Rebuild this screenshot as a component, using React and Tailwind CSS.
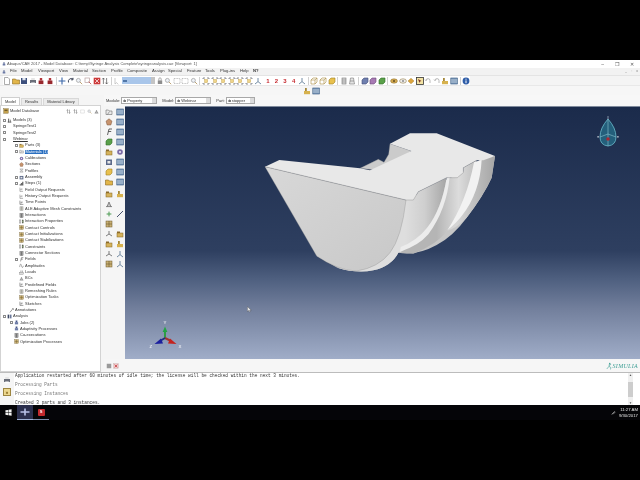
const glyphs = {
  doc: <path d="M1.5.5h3.5l1.5 1.5v5.5h-5z" fill="#fff" stroke="#8a8a8a" strokeWidth=".7" />,
  open: <path d="M.5 2h3l1 1h3v4h-7z" fill="#e2b64a" stroke="#8a6a20" strokeWidth=".6" />,
  disk: <><rect x="1" y="1" width="6" height="6" fill="#3c4f7c" /><rect x="2.4" y="1" width="3.2" height="2.2" fill="#dfe5ef" /></>,
  print: <><rect x="1" y="3" width="6" height="3" fill="#6b6f7a" /><rect x="2.2" y="1" width="3.6" height="2" fill="#e5e5e5" /><rect x="2.2" y="5.5" width="3.6" height="1.8" fill="#fff" /></>,
  redjob: <><rect x="2.8" y="1" width="2.4" height="2.5" fill="#b3363a" /><rect x="1.6" y="3.5" width="4.8" height="3.6" fill="#98282e" /></>,
  move: <path d="M4 .6v6.8M.6 4h6.8" stroke="#3b66a8" strokeWidth="1.1" />,
  rot: <path d="M1.5 5.5A3 3 0 0 1 6 2M6 .8V2.8H4" fill="none" stroke="#30384d" strokeWidth=".9" />,
  mag: <><circle cx="3.4" cy="3.4" r="2" fill="#eef2f7" stroke="#9a9a9a" strokeWidth=".7" /><path d="M5 5l2.2 2.2" stroke="#b59a66" strokeWidth=".9" /></>,
  box: <><rect x="1" y="1" width="4.4" height="4.4" fill="none" stroke="#b8a0a0" strokeWidth=".7" /><path d="M4.6 4.6l2.6 2.6" stroke="#c4605c" strokeWidth=".9" /></>,
  fit: <><rect x=".7" y=".7" width="6.6" height="6.6" fill="#cc3a3a" /><path d="M2 2l4 4M6 2l-4 4" stroke="#fff" strokeWidth=".7" /></>,
  updown: <path d="M2.4 1v6M5.6 1v6M1.2 2.4L2.4 1l1.2 1.4M4.4 5.6L5.6 7l1.2-1.4" fill="none" stroke="#555" strokeWidth=".7" />,
  sel: <path d="M2 1v6l1.6-1.4 1.6 1.8" fill="none" stroke="#b5b5b5" strokeWidth=".7" />,
  lock: <><rect x="1.8" y="3.4" width="4.4" height="3.6" fill="#8d8d8d" /><path d="M2.8 3.4V2a1.2 1.2 0 0 1 2.4 0v1.4" fill="none" stroke="#8d8d8d" strokeWidth=".7" /></>,
  dashed: <rect x="1" y="1.5" width="6" height="5" fill="none" stroke="#a9a9a9" strokeWidth=".7" strokeDasharray="1 .6" />,
  view: <><path d="M1 2V1h2M5 1h2v1M7 6v1H5M3 7H1V6" fill="none" stroke="#5b6068" strokeWidth=".7" /><rect x="2.6" y="2.6" width="3" height="3" fill="#eed48a" stroke="#bd9a3a" strokeWidth=".4" /></>,
  axis: <path d="M4 1v3.6M4 4.6L1 7M4 4.6L7 7" fill="none" stroke="#52708e" strokeWidth=".8" />,
  cubeL: <path d="M1 3l2-2h4v4l-2 2H1zM1 3h4v4M5 3l2-2" fill="#fff" stroke="#a88a3c" strokeWidth=".6" />,
  cubeY: <path d="M1 3l2-2h4v4l-2 2H1z" fill="#e8c04e" stroke="#a07f22" strokeWidth=".6" />,
  grid: <><rect x="2" y="1" width="4" height="6" fill="#d9d9d9" stroke="#777" strokeWidth=".6" /><path d="M2 3h4M2 5h4" stroke="#777" strokeWidth=".5" /></>,
  grid2: <path d="M2.5 1h3l1 6h-5zM2 4h4" fill="#e4e4e4" stroke="#777" strokeWidth=".6" />,
  cubeB: <path d="M1 3l2-2h4v4l-2 2H1z" fill="#6f7fae" stroke="#444d78" strokeWidth=".6" />,
  cubeP: <path d="M1 3l2-2h4v4l-2 2H1z" fill="#a77ab3" stroke="#6d4a7a" strokeWidth=".6" />,
  cubeG: <path d="M1 3l2-2h4v4l-2 2H1z" fill="#5aa04a" stroke="#32702a" strokeWidth=".6" />,
  lens: <><ellipse cx="4" cy="4" rx="3.4" ry="2.2" fill="#d4aa50" stroke="#84682a" strokeWidth=".5" /><circle cx="4" cy="4" r="1" fill="#5f4b20" /></>,
  lensW: <><ellipse cx="4" cy="4" rx="3.4" ry="2.2" fill="#eee" stroke="#84682a" strokeWidth=".5" /><circle cx="4" cy="4" r="1" fill="#8b8b8b" /></>,
  dia: <path d="M4 1.2L7 4 4 6.8 1 4z" fill="#dca53e" stroke="#99711f" strokeWidth=".4" />,
  hl: <><rect x=".5" y=".5" width="7" height="7" fill="#f3e3a4" stroke="#333" strokeWidth=".8" /><path d="M2 2l3.5 2-1.5.5-.5 1.5z" fill="#7a2f20" /></>,
  undo: <path d="M6 6V3.6A2 2 0 0 0 2 3.6L1 2.6M2 3.6l1-1" fill="none" stroke="#9c9c9c" strokeWidth=".7" />,
  gold: <><rect x="1" y="4" width="6" height="3.2" fill="#d7b24e" /><rect x="2" y="1" width="1.8" height="3" fill="#a4873a" /></>,
  table: <><rect x=".8" y="1" width="6.6" height="6" fill="#7e9ab9" stroke="#33567f" strokeWidth=".6" /><path d="M.8 3h6.6M.8 5h6.6" stroke="#e8eef5" strokeWidth=".5" /></>,
  info: <><circle cx="4" cy="4" r="3.4" fill="#2f5da8" /><rect x="3.5" y="3.4" width="1" height="2.8" fill="#fff" /><rect x="3.5" y="1.7" width="1" height="1" fill="#fff" /></>,
  part: <><rect x="1" y="3" width="6" height="4" fill="#d5b25c" stroke="#83651f" strokeWidth=".5" /><rect x="1" y="1.5" width="3" height="1.5" fill="#8b6a2a" /></>,
  db: <><rect x="1" y="1" width="6" height="6" fill="#c2a04c" stroke="#6f5a20" strokeWidth=".5" /><rect x="2" y="2.4" width="4" height="1.2" fill="#4e3f1a" /></>,
  mat: <path d="M1 6.5V2h2.4l1 1H7v3.5zM2.5 6.5l2-3" fill="#e9e9e9" stroke="#6e6e6e" strokeWidth=".6" />,
  model: <><rect x="2" y="1" width="1.4" height="6" fill="#474747" /><rect x="4.6" y="2.6" width="1.4" height="4.4" fill="#7f7f7f" /><rect x="1" y="6" width="6" height="1" fill="#333" /></>,
  cal: <><circle cx="4" cy="4" r="2.8" fill="#7b6ba7" /><circle cx="4" cy="4" r="1.1" fill="#e9e6f2" /></>,
  sec: <path d="M4 .8L7 3.2 5.8 7H2.2L1 3.2z" fill="#c7936d" stroke="#7a553a" strokeWidth=".5" />,
  prof: <path d="M1.4 1.4h5.2L4.8 4l1.8 2.6H1.4L3.2 4z" fill="#ddd" stroke="#7a7a7a" strokeWidth=".6" />,
  asm: <><rect x="1" y="1.5" width="6" height="5.5" fill="#5c6a8a" /><rect x="2.4" y="3" width="3" height="2.5" fill="#e7e7e7" /></>,
  step: <path d="M1 7V5h2V3h2V1h2v6z" fill="#686868" />,
  req: <path d="M1.5 1v6h5M3 5V3M4.6 5V2" fill="none" stroke="#5a5a5a" strokeWidth=".7" />,
  tp: <path d="M1.5 1v6h5.5M3.4 5.5V3.4H6" fill="none" stroke="#3c3c3c" strokeWidth=".8" />,
  mesh: <path d="M1.5 1h5v6h-5zM1.5 3h5M1.5 5h5M4 1v6" fill="#f0f0e4" stroke="#5a5a5a" strokeWidth=".5" />,
  ctl: <><rect x="1" y="1" width="6" height="6" fill="#c9b074" stroke="#6c5a2c" strokeWidth=".5" /><path d="M1 4h6M4 1v6" stroke="#5b4a20" strokeWidth=".5" /></>,
  con: <><rect x="1" y="1.5" width="2" height="5" fill="#eee" stroke="#4f4f4f" strokeWidth=".5" /><rect x="5" y="1.5" width="2" height="5" fill="#87a86a" stroke="#4f4f4f" strokeWidth=".5" /></>,
  conn: <><rect x="1.5" y="1" width="5" height="6" fill="#aaa" stroke="#444" strokeWidth=".6" /><path d="M4 1v6" stroke="#333" strokeWidth=".7" /></>,
  field: <path d="M2.5 7L4 1h3M3.4 3.5h2.8" fill="none" stroke="#3f3f3f" strokeWidth=".8" />,
  amp: <path d="M1 6.5c1-6 2-6 3-2s2 3 3 0" fill="none" stroke="#5a5a5a" strokeWidth=".8" />,
  load: <><rect x="1" y="4" width="6" height="3" fill="#ddd" stroke="#666" strokeWidth=".5" /><path d="M3 .8v3M5.4.8v3" stroke="#444" strokeWidth=".7" /></>,
  bc: <path d="M1 6.6h6M2 6.6L4 2l2 4.6" fill="#c5c5c5" stroke="#4b4b4b" strokeWidth=".6" />,
  ann: <path d="M1.5 7L5.4 2M5 1h2v2" fill="none" stroke="#333" strokeWidth=".8" />,
  ana: <><rect x="1" y="1" width="2.6" height="6" fill="#3f4a66" /><rect x="4.6" y="1" width="2.6" height="6" fill="#6b7899" /></>,
  job: <><rect x="2.6" y=".8" width="2.8" height="2.6" fill="#45568a" /><rect x="1.4" y="3.4" width="5.2" height="3.6" fill="#6c7aa6" /></>,
  greenp: <path d="M4 1.6v4.8M1.6 4h4.8" stroke="#4d9a52" strokeWidth="1" />,
  line: <path d="M1 7l6-6" stroke="#33415f" strokeWidth=".9" />,
  csys: <path d="M4 4V1M4 4L1 6M4 4l3 2" fill="none" stroke="#4a4a4a" strokeWidth=".7" />,
  sq: <rect x="1" y="1" width="6" height="6" fill="#9a9a9a" />,
  x: <><rect x=".8" y=".8" width="6.4" height="6.4" fill="#efc9c9" stroke="#b8a0a0" strokeWidth=".4" /><path d="M2.2 2.2l3.6 3.6M5.8 2.2L2.2 5.8" stroke="#c0272d" strokeWidth=".9" /></>,
}

const Ic = ({ k, className = 'w-2 h-2' }) => (
  <svg viewBox="0 0 8 8" className={`shrink-0 ${className}`}>{glyphs[k]}</svg>
)

const Sep = () => <div className="w-px h-[8px] bg-[#d0d0d0] mx-[1px] shrink-0" />

const Dropdown = ({ w, text }) => (
  <div className={`flex items-center justify-between h-[7px] bg-white border border-[#a8a8a8] pl-[1px] ${w}`}>
    <span className="flex items-center gap-[1px]"><span className="text-[#777]">≑</span>{text}</span>
    <span className="w-[4px] h-full bg-[#dcdcdc]" />
  </div>
)

const menus = [
  ['File', 'w-[11px]'], ['Model', 'w-[17px]'], ['Viewport', 'w-[21px]'], ['View', 'w-[14px]'], ['Material', 'w-[19px]'],
  ['Section', 'w-[19px]'], ['Profile', 'w-[16px]'], ['Composite', 'w-[25px]'], ['Assign', 'w-[16px]'], ['Special', 'w-[19px]'],
  ['Feature', 'w-[18px]'], ['Tools', 'w-[15px]'], ['Plug-ins', 'w-[20px]'], ['Help', 'w-[13px]'],
]

// [label, icon, tree level, has expander, underlined]
const rows = [
  ['Models (3)', 'model', 0, true],
  ['SpringeTest1', null, 1, true],
  ['SpringeTest2', null, 1, true],
  ['Webinar', null, 1, true, true],
  ['Parts (3)', 'part', 2, true],
  ['Materials (1)', 'mat', 2, true],
  ['Calibrations', 'cal', 2],
  ['Sections', 'sec', 2],
  ['Profiles', 'prof', 2],
  ['Assembly', 'asm', 2, true],
  ['Steps (1)', 'step', 2, true],
  ['Field Output Requests', 'req', 2],
  ['History Output Requests', 'req', 2],
  ['Time Points', 'tp', 2],
  ['ALE Adaptive Mesh Constraints', 'mesh', 2],
  ['Interactions', 'conn', 2],
  ['Interaction Properties', 'con', 2],
  ['Contact Controls', 'ctl', 2],
  ['Contact Initializations', 'ctl', 2],
  ['Contact Stabilizations', 'ctl', 2],
  ['Constraints', 'con', 2],
  ['Connector Sections', 'conn', 2],
  ['Fields', 'field', 2, true],
  ['Amplitudes', 'amp', 2],
  ['Loads', 'load', 2],
  ['BCs', 'bc', 2],
  ['Predefined Fields', 'tp', 2],
  ['Remeshing Rules', 'mesh', 2],
  ['Optimization Tasks', 'ctl', 2],
  ['Sketches', 'tp', 2],
  ['Annotations', 'ann', 3],
  ['Analysis', 'ana', 4, true],
  ['Jobs (2)', 'job', 5, true],
  ['Adaptivity Processes', 'job', 5],
  ['Co-executions', 'conn', 5],
  ['Optimization Processes', 'ctl', 5],
]

// left offset of the row content for each tree level
const indent = ['pl-[2px]', 'pl-[2px]', 'pl-[14px]', 'pl-[4px]', 'pl-[2px]', 'pl-[9px]']

const TreeRow = ({ row }) => {
  const [label, icon, level, expander, underline] = row
  const selected = label.startsWith('Materials')
  return (
    <div className={`flex items-center h-[6.34px] whitespace-nowrap ${indent[level]}`}>
      <span className={`w-[3px] h-[3px] shrink-0 mr-[1px] ${expander ? 'border-[0.5px] border-[#8a8a8a]' : ''}`} />
      {level === 1 && <span className="w-[6px] shrink-0" />}
      {icon && <Ic k={icon} className="w-[5px] h-[5px] mr-[1px]" />}
      <span className={selected ? 'bg-[#2a6fc0] text-white px-[0.5px]' : underline ? 'underline' : ''}>{label}</span>
    </div>
  )
}

const toolboxGroups = [
  { cls: '', items: [['mat', 'table'], ['sec', 'table'], ['field', 'table'], ['cubeG', 'table'], ['part', 'cal'], ['asm', 'table'], ['cubeY', 'table'], ['open', 'table']] },
  { cls: 'mt-[4px]', items: [['part', 'gold'], ['bc', null], ['greenp', 'line'], ['ctl', null]] },
  { cls: 'mt-[2px]', items: [['csys', 'part'], ['part', 'gold'], ['csys', 'axis'], ['ctl', 'axis']] },
]

const Syringe = () => (
  <svg viewBox="0 0 780 480" className="absolute left-[125px] top-[14px] w-[260px] h-[160px]">
    <defs>
      <linearGradient id="front" x1="0" y1="0" x2="1" y2="1">
        <stop offset="0" stopColor="#d8d8d8" />
        <stop offset="1" stopColor="#c8c8c8" />
      </linearGradient>
      <linearGradient id="cyl" gradientUnits="userSpaceOnUse" x1="465" y1="0" x2="595" y2="0">
        <stop offset="0" stopColor="#dedede" />
        <stop offset=".45" stopColor="#cfcfcf" />
        <stop offset="1" stopColor="#a2a2a2" />
      </linearGradient>
      <linearGradient id="mid" gradientUnits="userSpaceOnUse" x1="560" y1="0" x2="680" y2="0">
        <stop offset="0" stopColor="#b5b5b5" />
        <stop offset=".55" stopColor="#dcdcdc" />
        <stop offset="1" stopColor="#bdbdbd" />
      </linearGradient>
      <linearGradient id="back" gradientUnits="userSpaceOnUse" x1="620" y1="0" x2="735" y2="0">
        <stop offset="0" stopColor="#d5d5d5" />
        <stop offset="1" stopColor="#a6a6a6" />
      </linearGradient>
    </defs>
    {/* whole lower body, keeps the background from showing between the parts */}
    <path d="M468 237L735 105 725 170Q700 225 650 290 610 345 560 372 500 405 445 395 425 435 370 448 320 458 262 440L200 405Z" fill="#c6c6c6" />
    {/* walls of the notch behind the flat top */}
    <path d="M330 142L385 115 402 124 416 100 420 68 484 90 405 150Z" fill="#cbcbcb" stroke="#8c8c8c" strokeWidth="1" />
    {/* far end of the barrel */}
    <path d="M690 112L735 105 725 170Q700 225 650 290 625 318 590 330 650 240 690 112Z" fill="url(#back)" />
    {/* second section */}
    <path d="M597 170L622 170 640 155 640 140 680 118 Q660 235 600 322 560 372 490 398 L450 395 Q560 330 597 170Z" fill="url(#mid)" />
    {/* light rib near the far end */}
    <path d="M672 124L695 116Q690 215 635 285 620 305 592 328 650 240 672 124Z" fill="#f2f2f2" />
    {/* first section, next to the cap */}
    <path d="M468 237L490 237 505 212 590 170Q575 265 525 335 495 370 445 395 425 435 370 448 320 458 262 440 420 430 468 237Z" fill="url(#cyl)" />
    {/* light rib */}
    <path d="M590 170L599 168Q590 265 535 340 505 375 450 392L452 378Q500 360 530 322 575 265 590 170Z" fill="#ececec" />
    {/* round cap */}
    <path d="M45 137L468 237Q455 350 420 395 385 440 320 450 262 448 200 405Z" fill="url(#front)" stroke="#8d8d8d" strokeWidth="1" />
    {/* flat top */}
    <path d="M45 137L88 117 330 142 360 148 484 90 420 68 480 37 560 37 735 105 700 118 680 118 640 140 640 155 622 170 590 170 505 212 490 237 468 237Z" fill="#e8e8e8" />
    <path d="M45 137L468 237 490 237 505 212 590 170 622 170 640 155 640 140 680 118" fill="none" stroke="#8c8c8c" strokeWidth="1.2" />
  </svg>
)

const Triad = () => (
  <svg viewBox="0 0 40 34" className="absolute left-[21px] top-[209px] w-[40px] h-[34px]">
    <path d="M19 22V15" stroke="#2f9c46" strokeWidth="2" />
    <path d="M16.6 16L19 10.5l2.4 5.5z" fill="#23a544" />
    <path d="M19 22l6 3" stroke="#a5332f" strokeWidth="2" />
    <path d="M24 22.5l6.5 5.5-8.5-.5z" fill="#c4231f" />
    <path d="M19 22l-5 3" stroke="#24317f" strokeWidth="2" />
    <path d="M15 22.5L8.5 28l8.5-.5z" fill="#1b1f9e" />
    <text x="17.6" y="7.6" fill="#fff" fontFamily="Liberation Sans, sans-serif" fontSize="4.4">Y</text>
    <text x="3.6" y="31.5" fill="#fff" fontFamily="Liberation Sans, sans-serif" fontSize="4.4">Z</text>
    <text x="32.6" y="31.5" fill="#fff" fontFamily="Liberation Sans, sans-serif" fontSize="4.4">X</text>
  </svg>
)

const Compass = () => (
  <svg viewBox="0 0 24 34" className="absolute right-[20px] top-[8px] w-[24px] h-[34px]">
    <path d="M12 1v3" stroke="#c9d2df" strokeWidth=".6" />
    <path d="M12 4Q20 13 20 22 20 30 12 31 4 30 4 22 4 13 12 4Z" fill="#245f7b" stroke="#63b0c2" strokeWidth=".9" />
    <path d="M12 4v15M4 22l8-3 8 3M12 19v12" fill="none" stroke="#8cc5d2" strokeWidth=".6" />
    <circle cx="12" cy="24" r="1.8" fill="#a82835" />
    <rect x="1.4" y="21" width="1.4" height="1.6" fill="#b8c0cb" />
    <rect x="21.2" y="21" width="1.4" height="1.6" fill="#b8c0cb" />
  </svg>
)

export default function App() {
  return (
    <div className="w-[640px] h-[480px] bg-black pt-[60px] pb-[60px] overflow-hidden blur-[0.35px] text-[#333] text-[4px] leading-none" style={{ fontFamily: '"Liberation Sans", sans-serif' }}>
      <div className="h-[360px] flex flex-col bg-[#f5f5f5]">
        {/* title bar */}
        <div className="h-[8px] bg-white flex items-center pl-[2px] shrink-0">
          <Ic k="job" className="w-[4px] h-[4px] mr-[1px]" />
          <span className="text-[#555] text-[4px]">Abaqus/CAE 2017 - Model Database: C:\temp\Syringe Analysis Complete\syringeanalysis.cae [Viewport: 1]</span>
          <div className="ml-auto flex items-center gap-[11px] pr-[6px] text-[#555] text-[5px]">
            <span>–</span><span>❐</span><span>✕</span>
          </div>
        </div>
        {/* menu bar */}
        <div className="h-[7px] bg-[#f2f2f2] flex items-center pl-[2px] shrink-0 text-[4.2px]">
          <Ic k="job" className="w-[4px] h-[4px] mr-[4px]" />
          <div className="flex">
            {menus.map(([m, w]) => <span key={m} className={`whitespace-nowrap ${w}`}>{m}</span>)}
            <span className="font-bold">N?</span>
          </div>
          <div className="ml-auto flex gap-[4px] pr-[2px] text-[#777] text-[3.5px]"><span>_</span><span>▫</span><span>x</span></div>
        </div>
        {/* main toolbar */}
        <div className="h-[10px] bg-[#f4f4f4] flex items-center pl-[3px] shrink-0 border-t border-[#e4e4e4]">
          <div className="flex items-center gap-[0.6px] bg-white h-full w-[467px]">
            {['doc', 'open', 'disk', 'print', 'redjob', 'redjob'].map((k, i) => <Ic key={i} k={k} />)}
            <Sep />
            {['move', 'rot', 'mag', 'box', 'fit', 'updown'].map((k, i) => <Ic key={i} k={k} />)}
            <Sep />
            <Ic k="sel" />
            <div className="w-[33px] h-[7px] bg-[#a9c6ea] flex justify-between items-center shrink-0">
              <span className="w-[4px] h-[2px] ml-[1px] bg-[#5177a8]" />
              <span className="w-[4px] h-full bg-[#c4c4c4]" />
            </div>
            {['lock', 'mag', 'dashed', 'dashed', 'mag'].map((k, i) => <Ic key={i} k={k} />)}
            <Sep />
            {['view', 'view', 'view', 'view', 'view', 'view', 'axis'].map((k, i) => <Ic key={i} k={k} />)}
            <span className="w-[1px] shrink-0" />
            {['1', '2', '3', '4'].map((n) => (
              <span key={n} className="w-2 text-center text-[#c6282e] font-bold text-[6px] shrink-0">{n}</span>
            ))}
            <Ic k="axis" />
            <Sep />
            {['cubeL', 'cubeL', 'cubeY'].map((k, i) => <Ic key={i} k={k} />)}
            <Sep />
            {['grid', 'grid2'].map((k, i) => <Ic key={i} k={k} />)}
            <Sep />
            {['cubeB', 'cubeP', 'cubeG'].map((k, i) => <Ic key={i} k={k} />)}
            <Sep />
            {['lens', 'lensW', 'dia', 'hl', 'undo', 'undo', 'gold', 'table'].map((k, i) => <Ic key={i} k={k} />)}
            <Sep />
            <Ic k="info" />
          </div>
        </div>
        {/* second toolbar row */}
        <div className="h-[10px] bg-[#f6f6f6] flex items-center justify-end pr-[320px] gap-[1px] shrink-0 border-t border-[#e8e8e8]">
          <Ic k="gold" />
          <Ic k="table" />
        </div>
        {/* body */}
        <div className="flex flex-1 min-h-0">
          {/* left side */}
          <div className="w-[104px] shrink-0 flex flex-col pr-[3px]">
            <div className="h-[8px] mt-[2px] flex items-end pl-[1px] gap-[1px] shrink-0">
              <span className="h-[8px] px-[3px] bg-white border border-b-0 border-[#cfcfcf] flex items-center">Model</span>
              <span className="h-[7px] px-[3px] bg-[#ebebeb] border border-b-0 border-[#d8d8d8] flex items-center">Results</span>
              <span className="h-[7px] px-[3px] bg-[#ebebeb] border border-b-0 border-[#d8d8d8] flex items-center">Material Library</span>
            </div>
            <div className="flex-1 bg-white border border-[#d3d3d3] flex flex-col min-h-0">
              <div className="h-[10px] flex items-center pl-[2px] shrink-0">
                <Ic k="db" className="w-[6px] h-[6px] mr-[1px]" />
                <span>Model Database</span>
                <div className="ml-auto flex items-center gap-[2px] pr-[1px]">
                  <Ic k="updown" className="w-[5px] h-[5px]" />
                  <Ic k="updown" className="w-[5px] h-[5px]" />
                  <Ic k="dashed" className="w-[5px] h-[5px]" />
                  <Ic k="mag" className="w-[5px] h-[5px]" />
                  <Ic k="bc" className="w-[5px] h-[5px]" />
                </div>
              </div>
              <div className="pt-[1px]">
                {rows.map((r) => <TreeRow key={r[0]} row={r} />)}
              </div>
            </div>
          </div>
          {/* right side */}
          <div className="flex-1 flex flex-col min-w-0">
            <div className="h-[11px] flex items-center gap-[5px] pl-[2px] bg-[#f7f7f7] shrink-0">
              <span className="flex items-center gap-[1px]">Module: <Dropdown w="w-[36px]" text="Property" /></span>
              <span className="flex items-center gap-[1px]">Model: <Dropdown w="w-[36px]" text="Webinar" /></span>
              <span className="flex items-center gap-[1px]">Part: <Dropdown w="w-[29px]" text="stopper" /></span>
            </div>
            <div className="flex-1 flex min-h-0">
              <div className="w-[21px] shrink-0 flex flex-col pt-[2px]">
                {toolboxGroups.map((g, n) => (
                  <div key={n} className={`grid grid-cols-2 justify-items-center gap-y-[2px] ${g.cls}`}>
                    {g.items.flatMap((pair, i) => pair.map((k, j) =>
                      k ? <Ic key={`${i}-${j}`} k={k} /> : <span key={`${i}-${j}`} className="w-2 h-2" />
                    ))}
                  </div>
                ))}
              </div>
              <div className="relative flex-1 bg-[linear-gradient(#1b2b4b_0%,#2e3f60_57%,#4f6080_68.5%,#727f9c_80%,#a0adc8_100%)] border-t border-[#7f8a9c]">
                <Syringe />
                <Triad />
                <Compass />
                <svg viewBox="0 0 6 8" className="absolute left-[122px] top-[199px] w-[5px] h-[7px]">
                  <path d="M.5.5v6l1.6-1.4L3 7l1-.4-.9-1.8h2z" fill="#e8e8e8" stroke="#444" strokeWidth=".4" />
                </svg>
              </div>
            </div>
            <div className="h-[13px] flex items-center shrink-0 bg-[#f6f6f6]">
              <div className="flex gap-[1px] pl-[2px]">
                <Ic k="sq" className="w-[6px] h-[6px]" />
                <Ic k="x" className="w-[6px] h-[6px]" />
              </div>
              <div className="ml-auto flex items-center gap-[1px] pr-[2px] text-[#3d9e94]">
                <svg viewBox="0 0 8 10" className="w-[6px] h-[8px]">
                  <circle cx="5" cy="1.5" r="1" fill="#3d9e94" />
                  <path d="M5 3L3.6 6 1 9M4 5.5L6.5 7 6 9.6M3.5 3.6L6.8 3" fill="none" stroke="#3d9e94" strokeWidth=".8" />
                </svg>
                <span className="italic text-[6px] tracking-[0.3px]" style={{ fontFamily: '"Liberation Serif", serif' }}>SIMULIA</span>
              </div>
            </div>
          </div>
        </div>
        {/* message area */}
        <div className="h-[33px] shrink-0 flex border-t border-[#bcbcbc]">
          <div className="w-[14px] shrink-0 flex flex-col items-center pt-[3px] gap-[4px]">
            <Ic k="print" className="w-[8px] h-[8px]" />
            <div className="w-[8px] h-[8px] bg-[#ecd78e] border-[0.5px] border-[#9c8540] flex items-center justify-center text-[#7a5a10] text-[5px] font-bold">»</div>
          </div>
          <div className="flex-1 bg-white flex min-w-0 overflow-hidden">
            <div className="flex-1 text-[4.44px] pl-[1px] overflow-hidden" style={{ fontFamily: '"Liberation Mono", monospace' }}>
              <p className="h-[9px] pt-[1px] text-[#333]">Application restarted after 60 minutes of idle time; the license will be checked within the next 3 minutes.</p>
              <p className="h-[9px] pt-[1px] text-[#777]">Processing Parts</p>
              <p className="h-[9px] pt-[1px] text-[#777]">Processing Instances</p>
              <p className="h-[6px] pt-[1px] text-[#333]">Created 3 parts and 3 instances.</p>
            </div>
            <div className="w-[5px] mr-[7px] shrink-0 bg-[#f0f0f0] flex flex-col justify-between items-center pt-[1px]">
              <span className="text-[3px] text-[#555]">▲</span>
              <span className="w-full h-[15px] bg-[#cdcdcd]" />
              <span className="text-[3px] text-[#555]">▼</span>
            </div>
          </div>
        </div>
        {/* taskbar */}
        <div className="h-[15px] bg-[#050508] shrink-0 flex items-center text-white">
          <div className="w-[17px] flex justify-center">
            <svg viewBox="0 0 8 8" className="w-[7px] h-[7px]">
              <path d="M.5 1.4L3.6 1v2.8H.5zM4.1.9L7.5.4v3.4H4.1zM.5 4.2h3.1V7L.5 6.6zM4.1 4.2h3.4v3.4L4.1 7.1z" fill="#f2f2f2" />
            </svg>
          </div>
          <div className="w-[16px] h-full bg-[#2b2f4d] border-b border-[#9fb2d6] flex items-center justify-center">
            <svg viewBox="0 0 10 8" className="w-[10px] h-[8px]">
              <path d="M5 .5v7M.5 4h9" stroke="#b9c2e8" strokeWidth="1.6" />
            </svg>
          </div>
          <div className="w-[16px] h-full border-b border-[#7d8cab] flex items-center justify-center">
            <div className="w-[7px] h-[7px] bg-[#c22a2e] rounded-[1px] flex items-center justify-center text-[4px] font-bold">S</div>
          </div>
          <div className="ml-auto flex items-center gap-[3px] pr-[2px]">
            <svg viewBox="0 0 8 8" className="w-[5px] h-[5px]">
              <path d="M1 7l5-5M3 7L7 3" stroke="#c9c9c9" strokeWidth="1" />
            </svg>
            <div className="text-right text-[4.3px] leading-[5.4px] text-[#e5e5e5]">
              <p>11:27 AM</p>
              <p>9/30/2017</p>
            </div>
          </div>
        </div>
      </div>
    </div>
  )
}
